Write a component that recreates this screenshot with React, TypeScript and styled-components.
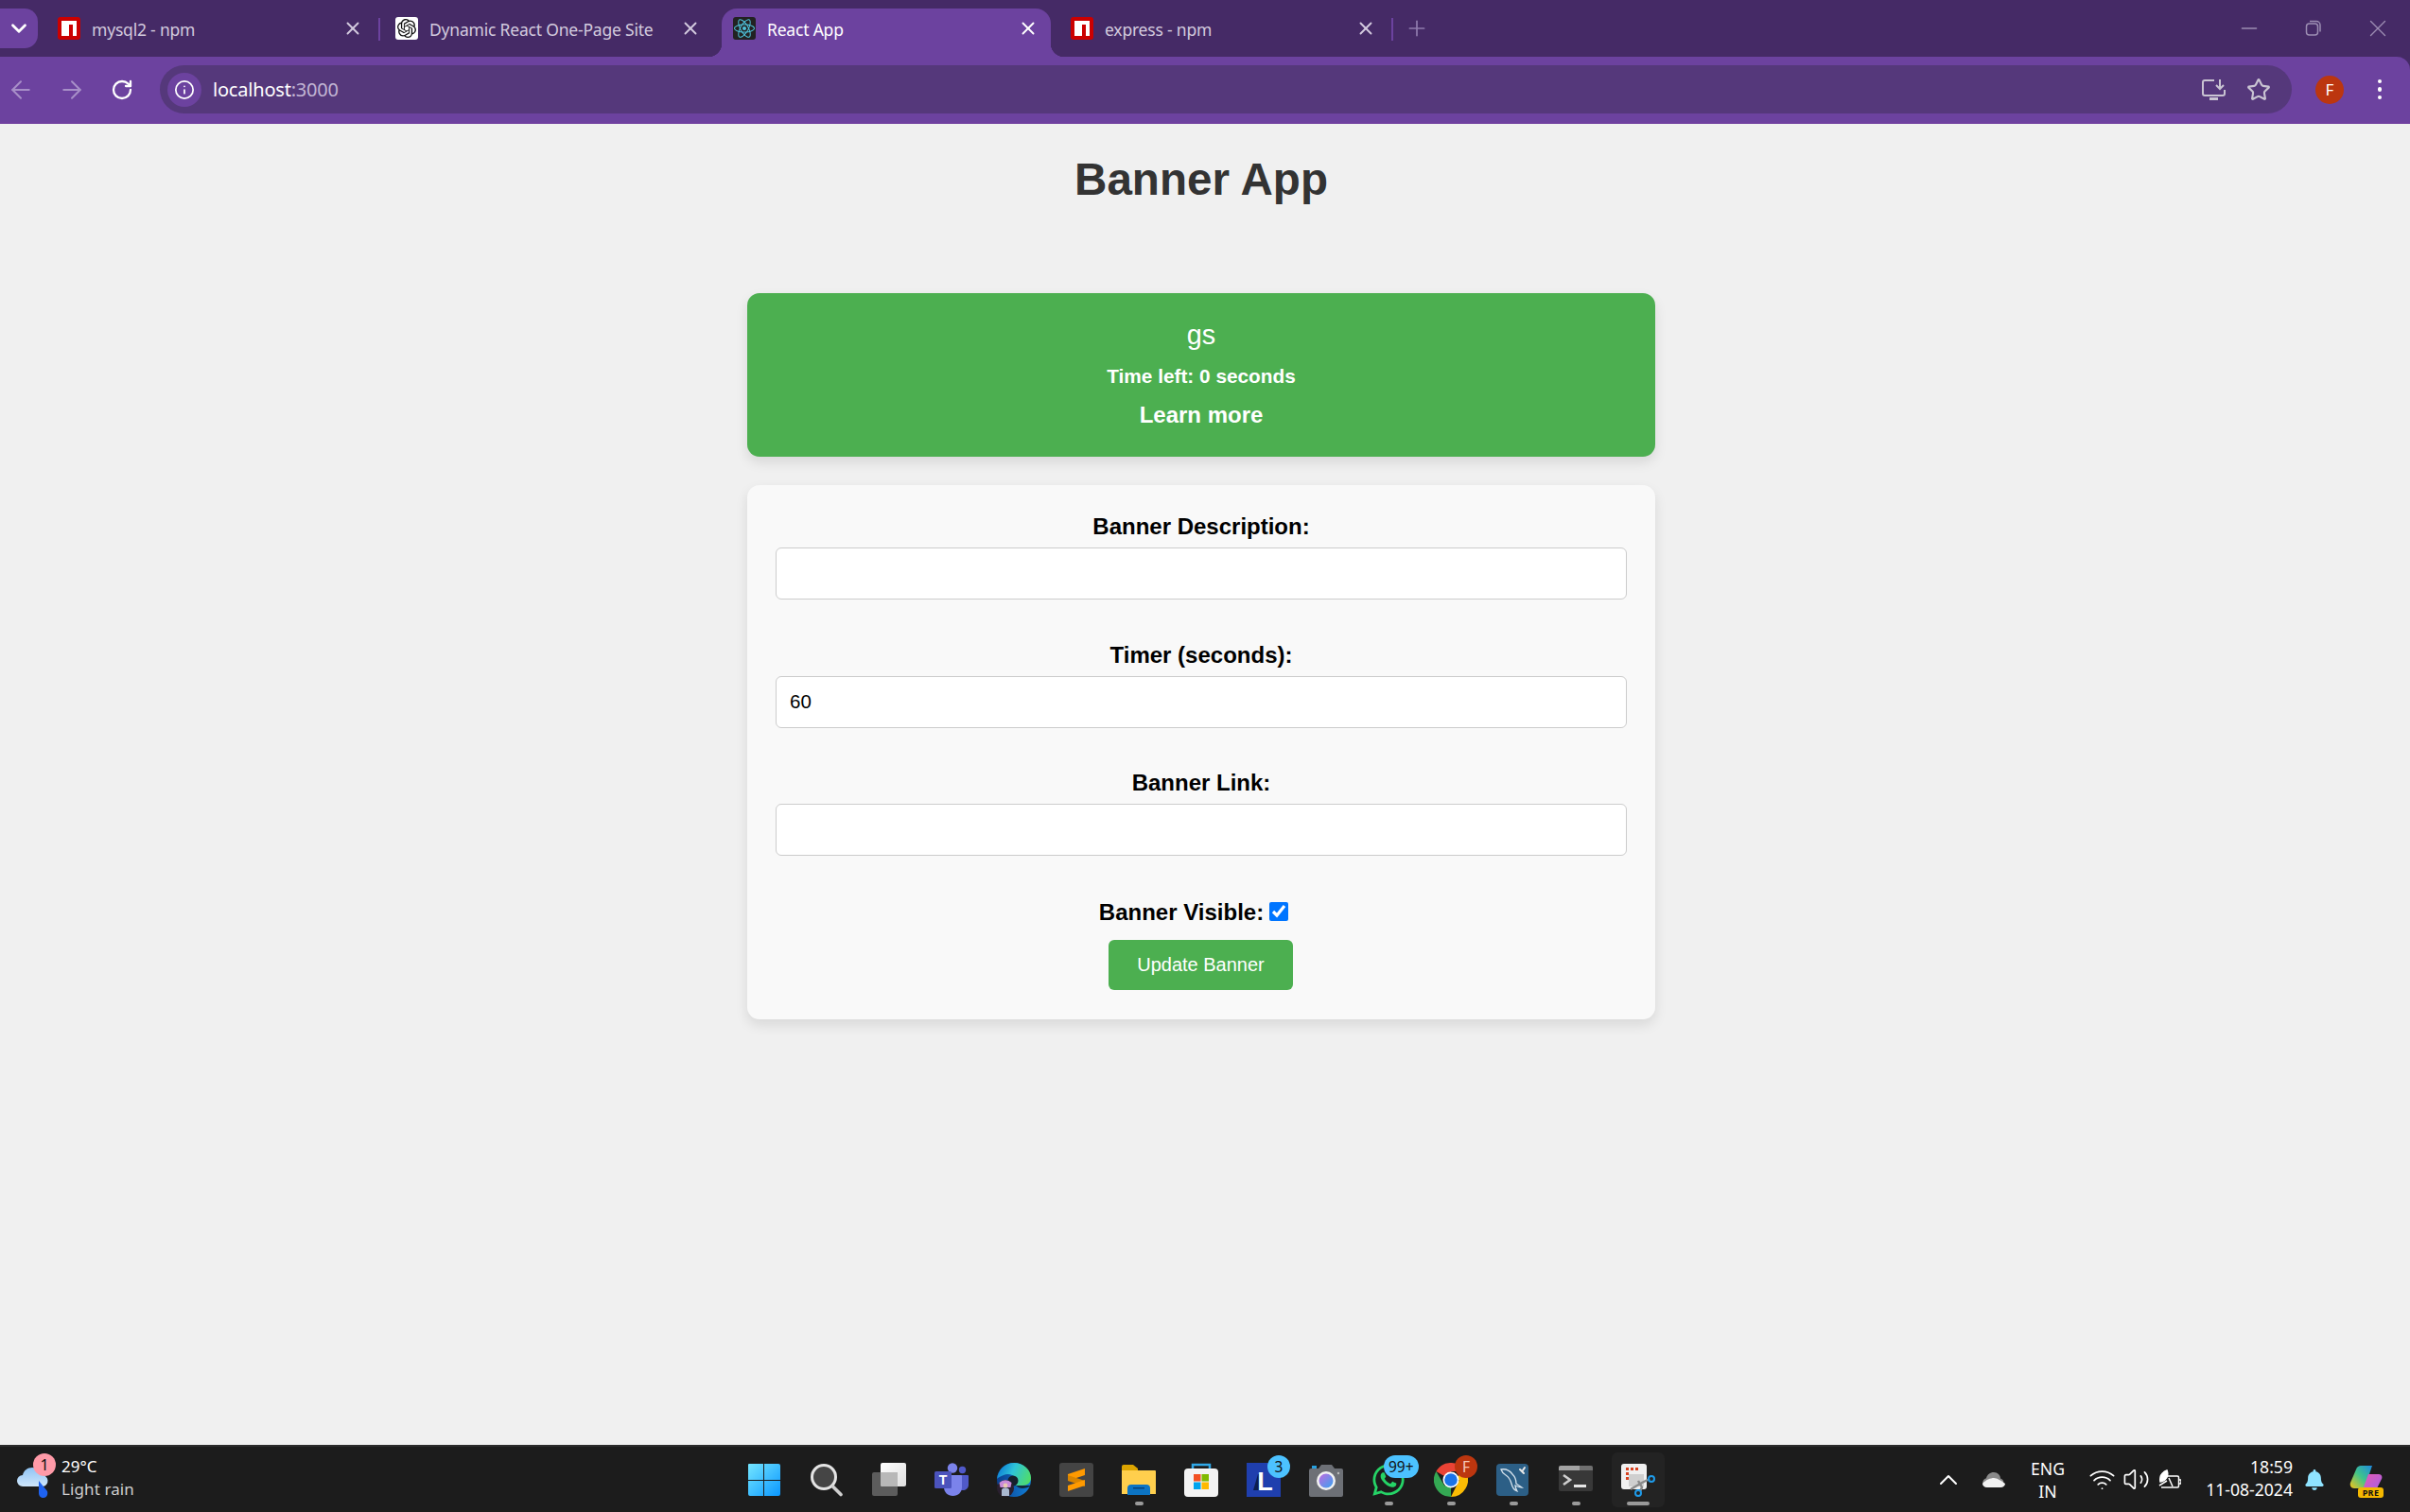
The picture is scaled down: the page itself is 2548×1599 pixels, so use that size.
import React from "react";
import styled, { createGlobalStyle } from "styled-components";
import { ArrowLeft, ArrowRight, RotateCw, Star, X, Plus, Info, ChevronDown, ChevronUp, Minus, Wifi, Volume2 } from "lucide-react";
import { SiOpenai, SiReact } from "react-icons/si";
import { FaWhatsapp, FaBell } from "react-icons/fa";

const Global = createGlobalStyle`
  html, body { margin: 0; padding: 0; background: #f0f0f0; }
  * { box-sizing: border-box; }
`;

const Shell = styled.div`
  height: 100vh;
  display: flex;
  flex-direction: column;
  overflow: hidden;
  font-family: "Liberation Sans", Arial, sans-serif;
`;

const Chrome = styled.header`
  background: #452a66;
  font-family: "Noto Sans", sans-serif;
  flex: none;
`;
const TitleRow = styled.div`
  height: 60px;
  display: flex;
  align-items: flex-start;
`;
const TabSearch = styled.div`
  width: 40px;
  height: 42px;
  margin: 9px 7px 0 0;
  background: #6c429f;
  border-radius: 0 14px 14px 0;
  display: flex;
  align-items: center;
  justify-content: center;
  color: #fff;
`;
const Tab = styled.div<{ $active?: boolean; $sep?: boolean }>`
  position: relative;
  height: 51px;
  margin: 9px ${(p) => (p.$active ? "7px" : "0")} 0 ${(p) => (p.$active ? "2px" : "0")};
  width: ${(p) => (p.$active ? "348px" : "357px")};
  padding: 9px ${(p) => (p.$active ? "12px" : "19px")} 0 ${(p) => (p.$active ? "12px" : "14px")};
  display: flex;
  align-items: flex-start;
  background: ${(p) => (p.$active ? "#6c429f" : "transparent")};
  border-radius: 16px 16px 0 0;
  color: ${(p) => (p.$active ? "#ffffff" : "#d3cade")};
  ${(p) =>
    p.$active
      ? `
    &::before, &::after { content: ""; position: absolute; bottom: 0; width: 14px; height: 14px; }
    &::before { left: -14px; background: radial-gradient(circle at 0 0, transparent 14px, #6c429f 14.5px); }
    &::after { right: -14px; background: radial-gradient(circle at 100% 0, transparent 14px, #6c429f 14.5px); }
  `
      : ""}
  ${(p) =>
    p.$sep
      ? `
    &::after { content: ""; position: absolute; left: 353px; top: 10px; width: 2px; height: 24px; background: #6c429f; }
  `
      : ""}
`;
const Favicon = styled.span<{ $bg: string }>`
  width: 24px;
  height: 24px;
  flex: none;
  border-radius: 3px;
  background: ${(p) => p.$bg};
  display: flex;
  align-items: center;
  justify-content: center;
`;
const TabTitle = styled.span`
  font-size: 17.5px;
  line-height: 24px;
  margin: 1px 0 0 12px;
  white-space: nowrap;
  letter-spacing: -0.2px;
`;
const TabClose = styled.span`
  margin: 0 0 0 auto;
  display: flex;
  width: 24px;
  height: 24px;
  align-items: center;
  justify-content: center;
`;
const NewTab = styled.span`
  margin: 17px 0 0 10px;
  color: #8f7bad;
  display: flex;
`;
const WindowButtons = styled.div`
  margin-left: auto;
  display: flex;
  height: 59px;
  color: #9c8db2;
`;
const WindowButton = styled.span`
  width: 68px;
  display: flex;
  align-items: center;
  justify-content: center;
`;
const Toolbar = styled.div`
  height: 71px;
  background: #6c429f;
  border-bottom: 2px solid #7040a0;
  border-radius: 0 14px 0 0;
  display: flex;
  align-items: center;
  color: #fff;
`;
const NavGroup = styled.div`
  display: flex;
  gap: 9.5px;
  margin-right: 18px;
`;
const NavButton = styled.span<{ $muted?: boolean }>`
  width: 44px;
  display: flex;
  align-items: center;
  justify-content: center;
  color: ${(p) => (p.$muted ? "#a78fc8" : "#ffffff")};
`;
const Omnibox = styled.div`
  flex: 1;
  height: 51px;
  background: #55387b;
  border-radius: 26px;
  display: flex;
  align-items: center;
  padding: 0 22px 0 8px;
`;
const SiteInfo = styled.span`
  width: 36px;
  height: 36px;
  border-radius: 50%;
  background: #6c429f;
  display: flex;
  align-items: center;
  justify-content: center;
`;
const Url = styled.span`
  margin-left: 12px;
  font-size: 20px;
  letter-spacing: -0.2px;
  color: #fff;
`;
const Port = styled.span`
  color: #c2b5d4;
`;
const OmniActions = styled.div`
  margin-left: auto;
  display: flex;
  align-items: center;
  gap: 22px;
  color: #c9c4d2;
`;
const ProfileArea = styled.div`
  width: 125px;
  flex: none;
  display: flex;
  align-items: center;
  padding-left: 25px;
`;
const Avatar = styled.span`
  width: 30px;
  height: 30px;
  border-radius: 50%;
  background: #bc360f;
  color: #fff;
  font-size: 17px;
  display: flex;
  align-items: center;
  justify-content: center;
`;
const Kebab = styled.span`
  width: 16px;
  margin-left: 30px;
  display: flex;
  flex-direction: column;
  align-items: center;
  gap: 4px;
`;
const KebabDot = styled.i`
  width: 4.500px;
  height: 4.500px;
  border-radius: 50%;
  background: #fff;
  display: block;
`;

const Main = styled.main`
  flex: 1;
  background: #f0f0f0;
  padding-right: 8px;
  display: flex;
  flex-direction: column;
  align-items: center;
`;
const Title = styled.h1`
  margin: 31px 0 92px;
  font-size: 47.6px;
  line-height: 56px;
  font-weight: 700;
  color: #333;
`;
const Banner = styled.section`
  width: 960px;
  height: 173px;
  padding-top: 27px;
  background: #4caf50;
  color: #fff;
  border-radius: 13px;
  box-shadow: 0 6px 13px rgba(0, 0, 0, 0.1);
  text-align: center;
`;
const BannerText = styled.p`
  margin: 0 0 15px;
  font-size: 28.8px;
  line-height: 34px;
`;
const BannerTimer = styled.p`
  margin: 0 0 14px;
  font-size: 20.8px;
  line-height: 24px;
  font-weight: 700;
`;
const BannerLink = styled.a`
  display: block;
  font-size: 24px;
  line-height: 30px;
  font-weight: 700;
  color: #fff;
  text-decoration: none;
`;
const Card = styled.form`
  width: 960px;
  height: 565px;
  margin-top: 30px;
  padding: 30px;
  background: #f9f9f9;
  border-radius: 13px;
  box-shadow: 0 6px 13px rgba(0, 0, 0, 0.1);
  display: flex;
  flex-direction: column;
  align-items: center;
`;
const Field = styled.label`
  width: 100%;
  display: flex;
  flex-direction: column;
  gap: 8px;
  margin-bottom: 44.5px;
  text-align: center;
`;
const FieldLabel = styled.span`
  font-size: 24px;
  line-height: 28px;
  font-weight: 700;
  color: #000;
`;
const TextInput = styled.input`
  width: 100%;
  height: 55px;
  padding: 0 14px;
  background: #fff;
  border: 1.5px solid #ccc;
  border-radius: 6px;
  font: 20.5px "Liberation Sans", Arial, sans-serif;
  color: #000;
  outline: none;
`;
const CheckRow = styled.label`
  display: flex;
  align-items: center;
  gap: 6px;
  height: 28px;
  margin-top: 1.5px;
`;
const Check = styled.input`
  width: 20px;
  height: 20px;
  margin: -3px 16px 0 0;
  accent-color: #0075ff;
`;
const Submit = styled.button`
  width: 195px;
  height: 53px;
  margin: 15px 1px 0 0;
  border: 0;
  border-radius: 6px;
  background: #4caf50;
  color: #fff;
  font: 20px "Liberation Sans", Arial, sans-serif;
`;

const Taskbar = styled.footer`
  height: 71px;
  flex: none;
  background: #1c1c1c;
  border-top: 2px solid #2b2b2b;
  display: grid;
  grid-template-columns: 1fr auto 1fr;
  padding-right: 8px;
  font-family: "Noto Sans", sans-serif;
  color: #fff;
`;
const Weather = styled.div`
  display: flex;
  align-items: center;
  padding-left: 18px;
  gap: 13px;
`;
const WeatherIcon = styled.span`
  position: relative;
  width: 34px;
  height: 33px;
  margin-top: 5px;
  display: block;
`;
const WeatherBadge = styled.span`
  position: absolute;
  left: 17px;
  top: -14px;
  width: 24px;
  height: 24px;
  border-radius: 50%;
  background: #ff9aa8;
  color: #111;
  font-size: 16px;
  line-height: 24px;
  text-align: center;
`;
const WeatherText = styled.div`
  display: flex;
  flex-direction: column;
  font-size: 17px;
  line-height: 24px;
  padding-bottom: 3px;
`;
const WeatherSub = styled.span`
  color: #cfcfcf;
  letter-spacing: 0.1px;
`;
const Dock = styled.div`
  display: flex;
`;
const DockItem = styled.div<{ $active?: boolean; $running?: boolean }>`
  position: relative;
  width: 66px;
  height: 69px;
  display: flex;
  align-items: center;
  justify-content: center;
  ${(p) =>
    p.$active
      ? `&::before { content: ""; position: absolute; left: 5px; right: 5px; top: 6px; bottom: 5px; background: #232323; border-radius: 6px; }`
      : ""}
  ${(p) =>
    p.$running
      ? `&::after { content: ""; position: absolute; left: 50%; bottom: 7px; width: ${p.$active ? 24 : 9}px; height: 4px; margin-left: ${p.$active ? -12 : -4.5}px; border-radius: 2px; background: #9a9a9a; }`
      : ""}
  svg { position: relative; }
`;
const CountBadge = styled.span<{ $bg: string; $fg: string; $wide?: boolean }>`
  position: absolute;
  top: 9px;
  left: ${(p) => (p.$wide ? "28px" : "37px")};
  min-width: 24px;
  height: 24px;
  padding: 0 ${(p) => (p.$wide ? "5px" : "0")};
  border-radius: 12px;
  background: ${(p) => p.$bg};
  color: ${(p) => p.$fg};
  font-size: 15.5px;
  line-height: 24px;
  text-align: center;
`;
const Tray = styled.div`
  display: flex;
  align-items: center;
  justify-content: flex-end;
  padding-right: 21px;
`;
const TraySlot = styled.span<{ $ml: number; $w: number }>`
  margin-left: ${(p) => p.$ml}px;
  width: ${(p) => p.$w}px;
  display: flex;
  align-items: center;
  justify-content: center;
  position: relative;
  svg { flex: none; }
`;
const TrayText = styled.span<{ $align: string; $lift?: boolean }>`
  display: flex;
  flex-direction: column;
  width: 100%;
  align-items: ${(p) => p.$align};
  font-size: 17.6px;
  line-height: 24px;
  white-space: nowrap;
  padding-bottom: ${(p) => (p.$lift ? "3px" : "0")};
`;
const PreTag = styled.span`
  position: absolute;
  right: -1px;
  bottom: -4px;
  width: 27px;
  height: 11px;
  border-radius: 3px;
  background: #f5b800;
  color: #111;
  font-size: 9px;
  line-height: 11px;
  font-weight: 700;
  text-align: center;
  letter-spacing: 0.4px;
`;

const Npm = () => (
  <Favicon $bg="#cb0000">
    <svg width="24" height="24" viewBox="0 0 24 24">
      <path d="M4 4H20V20H16V8H12V20H4Z" fill="#fff" />
    </svg>
  </Favicon>
);

const WinIcon = () => (
  <svg width="36" height="36" viewBox="0 0 36 36">
    <defs>
      <linearGradient id="win" x1="0" y1="0" x2="1" y2="1">
        <stop offset="0" stopColor="#74e6ff" />
        <stop offset="1" stopColor="#0a97ff" />
      </linearGradient>
    </defs>
    <path fill="url(#win)" d="M1 2a1 1 0 0 1 1-1h15v17H1ZM18 1h15a2 2 0 0 1 2 2v15H18ZM1 19h16v16H3a2 2 0 0 1-2-2ZM18 19h17v14a2 2 0 0 1-2 2H18Z" />
  </svg>
);
const SearchIcon = () => (
  <svg width="36" height="36" viewBox="0 0 36 36">
    <circle cx="15" cy="15" r="12.5" fill="#454545" stroke="#e4e4e4" strokeWidth="3" />
    <path d="M24.5 25 33 33.5" stroke="#cfcfcf" strokeWidth="3.6" strokeLinecap="round" />
  </svg>
);
const TaskViewIcon = () => (
  <svg width="36" height="36" viewBox="0 0 36 36">
    <defs>
      <linearGradient id="tv" x1="0" y1="0" x2="1" y2="1">
        <stop offset="0" stopColor="#fff" />
        <stop offset="1" stopColor="#dedede" />
      </linearGradient>
    </defs>
    <rect x="0" y="10" width="27" height="25" rx="2" fill="#5c5c5c" />
    <rect x="9" y="0" width="27" height="25" rx="2" fill="url(#tv)" />
    <path d="M9 10h18v15H11a2 2 0 0 1-2-2Z" fill="#b8b8b8" />
  </svg>
);
const TeamsIcon = () => (
  <svg width="36" height="36" viewBox="0 0 36 36">
    <circle cx="29.5" cy="7.5" r="3.7" fill="#5059c9" />
    <path d="M24 13h11a1 1 0 0 1 1 1v9c0 4-3 6-6 6s-6-2-6-6Z" fill="#5059c9" />
    <circle cx="19" cy="5.5" r="5.2" fill="#7b83eb" />
    <path d="M10 13h18a1 1 0 0 1 1 1v12c0 5-4 9-9.500 9S10 31 10 26Z" fill="#7b83eb" />
    <rect x="0" y="9" width="18" height="18" rx="1.500" fill="#4b53bc" />
    <text x="9" y="23" textAnchor="middle" fontFamily="Liberation Sans" fontWeight="700" fontSize="14" fill="#fff">T</text>
  </svg>
);
const EdgeIcon = () => (
  <svg width="36" height="36" viewBox="0 0 36 36">
    <defs>
      <linearGradient id="eg" x1="0" y1="0.3" x2="1" y2="0.6">
        <stop offset="0" stopColor="#0c7bd6" />
        <stop offset="0.45" stopColor="#2ec4d8" />
        <stop offset="1" stopColor="#4fdc6a" />
      </linearGradient>
      <linearGradient id="eb" x1="0" y1="0" x2="1" y2="0">
        <stop offset="0" stopColor="#0b3f8f" />
        <stop offset="1" stopColor="#1180d8" />
      </linearGradient>
    </defs>
    <circle cx="18" cy="18" r="18" fill="url(#eb)" />
    <path d="M0 17C1 7 9 0 18 0c10 0 18 7 18 16 0 5-4 8-9 8H19c3-2 3-5 1-8-3-4-9-5-13-3-3 1-6 3-7 4Z" fill="url(#eg)" />
    <circle cx="17" cy="19" r="5.500" fill="#15202c" />
    <path d="M20 24h16c-2 2-6 3-9 3-3 0-5-1-7-3Z" fill="#13283c" />
    <circle cx="9" cy="27" r="9" fill="#2a2030" />
    <path d="M2.500 21a9 9 0 0 1 13 0l-1 5h-11Z" fill="#c98bd9" />
    <circle cx="9" cy="24" r="2.400" fill="#e8c9b0" />
    <path d="M5 35v-6c0-2 2-2.500 4-2.500s4 .5 4 2.500v6Z" fill="#a9b8d0" />
  </svg>
);
const SublimeIcon = () => (
  <svg width="36" height="36" viewBox="0 0 36 36">
    <rect width="36" height="36" rx="3" fill="#444" />
    <path d="M9 12 27 6v7L9 19Z" fill="#ff9a00" />
    <path d="M9 13 27 19v6L9 19Z" fill="#d98500" />
    <path d="M9 24 27 18v6L9 30Z" fill="#ff9a00" />
  </svg>
);
const ExplorerIcon = () => (
  <svg width="36" height="36" viewBox="0 0 36 36">
    <path d="M0 4a2 2 0 0 1 2-2h10l5 4v6H0Z" fill="#dca400" />
    <path d="M0 8h35a1 1 0 0 1 1 1v24H0Z" fill="#ffcf4d" />
    <path d="M6 34V27a4 4 0 0 1 4-4h16a4 4 0 0 1 4 4v7Z" fill="#0c74c4" />
    <rect x="12" y="26" width="12" height="1.500" fill="#063f78" />
  </svg>
);
const StoreIcon = () => (
  <svg width="36" height="36" viewBox="0 0 36 36">
    <path d="M9 8V2h18v6" fill="none" stroke="#30a8e8" strokeWidth="2.500" />
    <rect x="0" y="6" width="36" height="30" rx="4" fill="#f3f3f3" />
    <rect x="10" y="12" width="7.500" height="7.500" fill="#f25022" />
    <rect x="18.500" y="12" width="7.500" height="7.500" fill="#7fba00" />
    <rect x="10" y="20.500" width="7.500" height="7.500" fill="#00a4ef" />
    <rect x="18.500" y="20.500" width="7.500" height="7.500" fill="#ffb900" />
  </svg>
);
const LIcon = () => (
  <svg width="36" height="36" viewBox="0 0 36 36">
    <rect width="36" height="36" fill="#1f3fae" />
    <path d="M12 12h5v17h-10Z" fill="#0c1f4f" />
    <text x="19.500" y="29" textAnchor="middle" fontFamily="Liberation Sans" fontWeight="700" fontSize="27" fill="#fff">L</text>
  </svg>
);
const CameraIcon = () => (
  <svg width="36" height="36" viewBox="0 0 36 36">
    <defs>
      <linearGradient id="cm" x1="0" y1="0" x2="1" y2="1">
        <stop offset="0" stopColor="#c06be0" />
        <stop offset="1" stopColor="#38a3ef" />
      </linearGradient>
    </defs>
    <rect x="3" y="3" width="5" height="3" fill="#27a0de" />
    <path d="M2 6h8l3-4h11l3 4h7a2 2 0 0 1 2 2v26a2 2 0 0 1-2 2H2a2 2 0 0 1-2-2V8a2 2 0 0 1 2-2Z" fill="#6d7076" />
    <circle cx="18" cy="19" r="10" fill="#f2f2f2" />
    <circle cx="18" cy="19" r="7.500" fill="url(#cm)" />
    <circle cx="31" cy="11" r="1.200" fill="#bbb" />
  </svg>
);
const ChromeIcon = () => (
  <svg width="36" height="36" viewBox="0 0 36 36">
    <path d="M18 18 2.400 9A18 18 0 0 1 33.600 9H18Z" fill="#ea4335" />
    <path d="M18 18 33.600 9A18 18 0 0 1 18 36l9-18Z" fill="#fbbc04" />
    <path d="M18 18 18 36A18 18 0 0 1 2.400 9l9 15.600Z" fill="#34a853" />
    <circle cx="18" cy="18" r="8.500" fill="#fff" />
    <circle cx="18" cy="18" r="6.800" fill="#1a73e8" />
  </svg>
);
const MysqlIcon = () => (
  <svg width="36" height="36" viewBox="0 0 36 36">
    <rect y="1" width="34" height="34" rx="4" fill="#2c5f86" />
    <path d="M5 7c5-1 9 1 12 5 3 3 4 7 4 10l6 4c-3 0-5-1-7-2 0 2 1 4 2 6-3-1-5-4-6-8-1-4-3-7-6-9-2-1-4-3-5-6Z" fill="none" stroke="#d5e2ec" strokeWidth="1.300" />
    <path d="M25 7l4 4M30 5l-2 3" stroke="#e8e8e8" strokeWidth="2" strokeLinecap="round" />
  </svg>
);
const TerminalIcon = () => (
  <svg width="36" height="36" viewBox="0 0 36 36">
    <rect y="3" width="36" height="27" rx="2" fill="#383838" />
    <path d="M2 3h20v5H0V5a2 2 0 0 1 2-2Z" fill="#a3a3a3" />
    <path d="M22 3h12a2 2 0 0 1 2 2v3H22Z" fill="#6f6f6f" />
    <path d="M5 13l7 5-7 5" fill="none" stroke="#cfcfcf" strokeWidth="2.600" />
    <rect x="16" y="23" width="13" height="3" fill="#e6e6e6" />
  </svg>
);
const SnipIcon = () => (
  <svg width="36" height="36" viewBox="0 0 36 36">
    <rect x="0" y="1" width="27" height="27" rx="3" fill="#f0f0f0" />
    <path d="M5 5h3v3H5ZM10 5h3v3h-3ZM15 5h3v3h-3ZM5 10h3v3H5ZM5 15h3v3H5Z" fill="#d6401f" />
    <rect x="8" y="12" width="16" height="13" fill="#cfcfcf" />
    <path d="M10 28 22 21l8-4" stroke="#8a8a8a" strokeWidth="2.500" fill="none" />
    <path d="M18 19 22 26 20 30" stroke="#8a8a8a" strokeWidth="2.500" fill="none" />
    <circle cx="32" cy="17" r="3" fill="none" stroke="#1e9bea" strokeWidth="2" />
    <circle cx="18" cy="32" r="3" fill="none" stroke="#1e9bea" strokeWidth="2" />
  </svg>
);

const tabs = [
  { title: "mysql2 - npm", icon: <Npm />, sep: true },
  {
    title: "Dynamic React One-Page Site",
    icon: (
      <Favicon $bg="#ffffff">
        <SiOpenai size={20} color="#111" />
      </Favicon>
    ),
  },
  {
    title: "React App",
    active: true,
    icon: (
      <Favicon $bg="#222222">
        <SiReact size={22} color="#4fc3dc" />
      </Favicon>
    ),
  },
  { title: "express - npm", icon: <Npm />, sep: true },
];

export default function App() {
  return (
    <Shell>
      <Global />
      <Chrome>
        <TitleRow>
          <TabSearch>
            <ChevronDown size={26} strokeWidth={2.6} />
          </TabSearch>
          {tabs.map((t) => (
            <Tab key={t.title} $active={t.active} $sep={t.sep}>
              {t.icon}
              <TabTitle>{t.title}</TabTitle>
              <TabClose>
                <X size={22} strokeWidth={2.1} />
              </TabClose>
            </Tab>
          ))}
          <NewTab>
            <Plus size={26} strokeWidth={1.6} />
          </NewTab>
          <WindowButtons>
            <WindowButton>
              <Minus size={26} strokeWidth={1.3} />
            </WindowButton>
            <WindowButton>
              <svg width="18" height="18" viewBox="0 0 18 18" fill="none" stroke="currentColor" strokeWidth="1.5">
                <rect x="1.500" y="4" width="12" height="12" rx="3" />
                <path d="M5 1.500h7a4 4 0 0 1 4 4v7" />
              </svg>
            </WindowButton>
            <WindowButton>
              <X size={30} strokeWidth={1.1} />
            </WindowButton>
          </WindowButtons>
        </TitleRow>
        <Toolbar>
          <NavGroup>
            <NavButton $muted>
              <ArrowLeft size={30} strokeWidth={1.6} />
            </NavButton>
            <NavButton $muted>
              <ArrowRight size={30} strokeWidth={1.6} />
            </NavButton>
            <NavButton>
              <RotateCw size={24} strokeWidth={2.3} />
            </NavButton>
          </NavGroup>
          <Omnibox>
            <SiteInfo>
              <Info size={22} strokeWidth={1.9} />
            </SiteInfo>
            <Url>
              localhost<Port>:3000</Port>
            </Url>
            <OmniActions>
              <svg width="25" height="23" viewBox="0 0 25 23" fill="none" stroke="currentColor" strokeWidth="2">
                <path d="M13 2H3a2 2 0 0 0-2 2v12a2 2 0 0 0 2 2h19a2 2 0 0 0 2-2v-4" />
                <path d="M19 1v9M15 7l4 4 4-4" />
                <path d="M8 21.500h9" strokeWidth="3" />
              </svg>
              <Star size={26} strokeWidth={2} />
            </OmniActions>
          </Omnibox>
          <ProfileArea>
            <Avatar>F</Avatar>
            <Kebab>
              <KebabDot />
              <KebabDot />
              <KebabDot />
            </Kebab>
          </ProfileArea>
        </Toolbar>
      </Chrome>

      <Main>
        <Title>Banner App</Title>
        <Banner>
          <BannerText>gs</BannerText>
          <BannerTimer>Time left: 0 seconds</BannerTimer>
          <BannerLink href="#">Learn more</BannerLink>
        </Banner>
        <Card>
          <Field>
            <FieldLabel>Banner Description:</FieldLabel>
            <TextInput type="text" defaultValue="" />
          </Field>
          <Field>
            <FieldLabel>Timer (seconds):</FieldLabel>
            <TextInput type="text" defaultValue="60" />
          </Field>
          <Field>
            <FieldLabel>Banner Link:</FieldLabel>
            <TextInput type="text" defaultValue="" />
          </Field>
          <CheckRow>
            <FieldLabel>Banner Visible:</FieldLabel>
            <Check type="checkbox" defaultChecked />
          </CheckRow>
          <Submit type="button">Update Banner</Submit>
        </Card>
      </Main>

      <Taskbar>
        <Weather>
          <WeatherIcon>
            <svg width="34" height="33" viewBox="0 0 34 33">
              <defs>
                <linearGradient id="cl" x1="0" y1="0" x2="0" y2="1">
                  <stop offset="0" stopColor="#8fc4f5" />
                  <stop offset="1" stopColor="#cfe6fb" />
                </linearGradient>
              </defs>
              <path d="M6 21a6 6 0 0 1 0-12c1-5 5-8 10-8s9 3 10 8a6 6 0 0 1 1 12Z" fill="url(#cl)" />
              <path d="M23 15l9 11c1 4-1 7-4 7s-5-2-5-5Z" fill="#1e62f0" />
            </svg>
            <WeatherBadge>1</WeatherBadge>
          </WeatherIcon>
          <WeatherText>
            <span>29°C</span>
            <WeatherSub>Light rain</WeatherSub>
          </WeatherText>
        </Weather>
        <Dock>
          <DockItem><WinIcon /></DockItem>
          <DockItem><SearchIcon /></DockItem>
          <DockItem><TaskViewIcon /></DockItem>
          <DockItem><TeamsIcon /></DockItem>
          <DockItem><EdgeIcon /></DockItem>
          <DockItem><SublimeIcon /></DockItem>
          <DockItem $running><ExplorerIcon /></DockItem>
          <DockItem><StoreIcon /></DockItem>
          <DockItem>
            <LIcon />
            <CountBadge $bg="#4cc2ff" $fg="#111">3</CountBadge>
          </DockItem>
          <DockItem><CameraIcon /></DockItem>
          <DockItem $running>
            <FaWhatsapp size={38} color="#25d366" />
            <CountBadge $bg="#4cc2ff" $fg="#111" $wide>99+</CountBadge>
          </DockItem>
          <DockItem $running>
            <ChromeIcon />
            <CountBadge $bg="#bc360f" $fg="#f5c9b8">F</CountBadge>
          </DockItem>
          <DockItem $running><MysqlIcon /></DockItem>
          <DockItem $running><TerminalIcon /></DockItem>
          <DockItem $running $active><SnipIcon /></DockItem>
        </Dock>
        <Tray>
          <TraySlot $ml={0} $w={16}>
            <ChevronUp size={32} strokeWidth={1.5} />
          </TraySlot>
          <TraySlot $ml={28} $w={24}>
            <svg width="24" height="16" viewBox="0 0 24 16">
              <path d="M5 16a5 5 0 0 1-1-9.800C5 2.500 8 0 12 0c4 0 7 3 7 6.500A5 5 0 0 1 19 16Z" fill="#8a8a8a" />
              <path d="M0 12c3-4 9-6 12-6s8 3 12 6c0 2-2 4-5 4H5c-3 0-5-2-5-4Z" fill="#f2f2f2" />
            </svg>
          </TraySlot>
          <TraySlot $ml={28} $w={34}>
            <TrayText $align="center">
              <span>ENG</span>
              <span>IN</span>
            </TrayText>
          </TraySlot>
          <TraySlot $ml={28} $w={24}>
            <Wifi size={29} strokeWidth={1.5} />
          </TraySlot>
          <TraySlot $ml={12} $w={24}>
            <Volume2 size={29} strokeWidth={1.4} />
          </TraySlot>
          <TraySlot $ml={12} $w={24}>
            <svg width="24" height="22" viewBox="0 0 24 22" fill="none" stroke="#fff" strokeWidth="1.500">
              <path d="M8 7h12a1.500 1.500 0 0 1 1.500 1.500v9a1.500 1.500 0 0 1-1.500 1.500H3" />
              <path d="M22 11h2v4h-2" />
              <path d="M2 13C1 7 4 3 9 1c2 5 0 11-7 12Z" fill="#fff" />
              <path d="M11 9l4 9M1 17l8-5" />
            </svg>
          </TraySlot>
          <TraySlot $ml={25} $w={93}>
            <TrayText $align="flex-end" $lift>
              <span>18:59</span>
              <span>11-08-2024</span>
            </TrayText>
          </TraySlot>
          <TraySlot $ml={13} $w={20}>
            <FaBell size={22} color="#8fe3ff" />
          </TraySlot>
          <TraySlot $ml={27} $w={35}>
            <svg width="35" height="30" viewBox="0 0 35 30">
              <defs>
                <linearGradient id="cp1" x1="0" y1="1" x2="1" y2="0">
                  <stop offset="0" stopColor="#f5c518" />
                  <stop offset="0.5" stopColor="#3fc48a" />
                  <stop offset="1" stopColor="#1f8ae0" />
                </linearGradient>
                <linearGradient id="cp2" x1="0" y1="0" x2="1" y2="1">
                  <stop offset="0" stopColor="#e85ab0" />
                  <stop offset="1" stopColor="#a060e8" />
                </linearGradient>
              </defs>
              <path d="M12 0h12l-8 24H5c-3 0-5-3-4-6L7 4c1-3 3-4 5-4Z" fill="url(#cp1)" />
              <path d="M20 9h11c3 0 4 3 3 5l-5 10c-1 3-3 4-6 4H13Z" fill="url(#cp2)" />
            </svg>
            <PreTag>PRE</PreTag>
          </TraySlot>
        </Tray>
      </Taskbar>
    </Shell>
  );
}
